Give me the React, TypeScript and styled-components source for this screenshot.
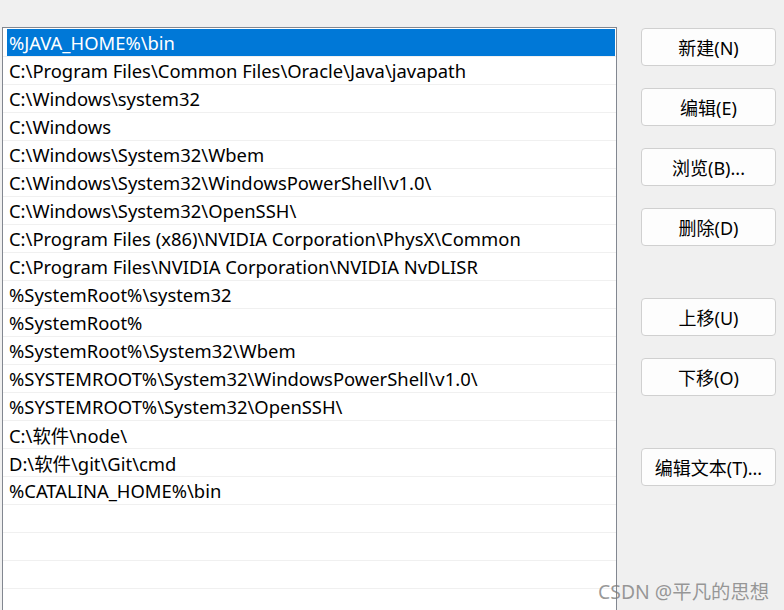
import { createGlobalStyle } from "styled-components";
import styled from "styled-components";

const GlobalStyle = createGlobalStyle`
    html, body {
        margin: 0;
        padding: 0;
        background-color: #f0f0f0;
        overflow: hidden;
    }
    body {
        font-family: "Noto Sans", "Noto Sans CJK SC", sans-serif;
    }
`

const Window = styled.div`
    position: relative;
    display: flex;
    align-items: flex-start;
    width: 784px;
    height: 610px;
    overflow: hidden;
    box-sizing: border-box;
    padding: 27px 0 0 2px;
`

const ListBox = styled.div`
    box-sizing: border-box;
    width: 615px;
    height: 583px;
    border: 1px solid #828790;
    border-bottom: none;
    background-color: #ffffff;
    padding-top: 1px;
    overflow: hidden;
`

const Row = styled.div`
    height: 28px;
    box-sizing: border-box;
    border-bottom: 1px solid #f0f0f0;
    padding-left: 4px;
    padding-right: 1px;
    display: flex;
`

const RowLabel = styled.div<{ $selected?: boolean }>`
    flex: 1;
    height: 27px;
    display: flex;
    align-items: center;
    padding-left: 2px;
    font-size: 18.4px;
    color: ${(p) => (p.$selected ? "#ffffff" : "#000000")};
    background-color: ${(p) => (p.$selected ? "#0078d7" : "transparent")};
    white-space: nowrap;
`

const ButtonColumn = styled.div`
    display: flex;
    flex-direction: column;
    margin-left: 24px;
    padding-top: 1px;
`

const Button = styled.button<{ $gap: number }>`
    width: 135px;
    height: 38px;
    margin-top: ${(p) => p.$gap}px;
    box-sizing: border-box;
    border: 1px solid #d0d0d0;
    border-radius: 4px;
    background-color: #fdfdfd;
    font-family: "Noto Sans", "Noto Sans CJK SC", sans-serif;
    font-size: 18px;
    color: #000000;
    padding: 0;
`

const Watermark = styled.div`
    position: absolute;
    left: 598px;
    top: 576px;
    font-family: "Noto Sans", "Noto Sans CJK SC", sans-serif;
    font-size: 19.4px;
    color: rgba(120, 120, 120, 0.75);
    white-space: nowrap;
`

const paths = [
    "%JAVA_HOME%\\bin",
    "C:\\Program Files\\Common Files\\Oracle\\Java\\javapath",
    "C:\\Windows\\system32",
    "C:\\Windows",
    "C:\\Windows\\System32\\Wbem",
    "C:\\Windows\\System32\\WindowsPowerShell\\v1.0\\",
    "C:\\Windows\\System32\\OpenSSH\\",
    "C:\\Program Files (x86)\\NVIDIA Corporation\\PhysX\\Common",
    "C:\\Program Files\\NVIDIA Corporation\\NVIDIA NvDLISR",
    "%SystemRoot%\\system32",
    "%SystemRoot%",
    "%SystemRoot%\\System32\\Wbem",
    "%SYSTEMROOT%\\System32\\WindowsPowerShell\\v1.0\\",
    "%SYSTEMROOT%\\System32\\OpenSSH\\",
    "C:\\软件\\node\\",
    "D:\\软件\\git\\Git\\cmd",
    "%CATALINA_HOME%\\bin",
    "",
    "",
    "",
    "",
    "",
];

const buttons = [
    { label: "新建(N)", gap: 0 },
    { label: "编辑(E)", gap: 22 },
    { label: "浏览(B)...", gap: 22 },
    { label: "删除(D)", gap: 22 },
    { label: "上移(U)", gap: 52 },
    { label: "下移(O)", gap: 22 },
    { label: "编辑文本(T)...", gap: 52 },
];

const App = () => (
    <>
        <GlobalStyle />
        <Window>
            <ListBox>
                {paths.map((p, i) => (
                    <Row key={i}>
                        <RowLabel $selected={i === 0}>{p}</RowLabel>
                    </Row>
                ))}
            </ListBox>
            <ButtonColumn>
                {buttons.map((b) => (
                    <Button key={b.label} $gap={b.gap}>{b.label}</Button>
                ))}
            </ButtonColumn>
            <Watermark>CSDN @平凡的思想</Watermark>
        </Window>
    </>
);

export default App;
